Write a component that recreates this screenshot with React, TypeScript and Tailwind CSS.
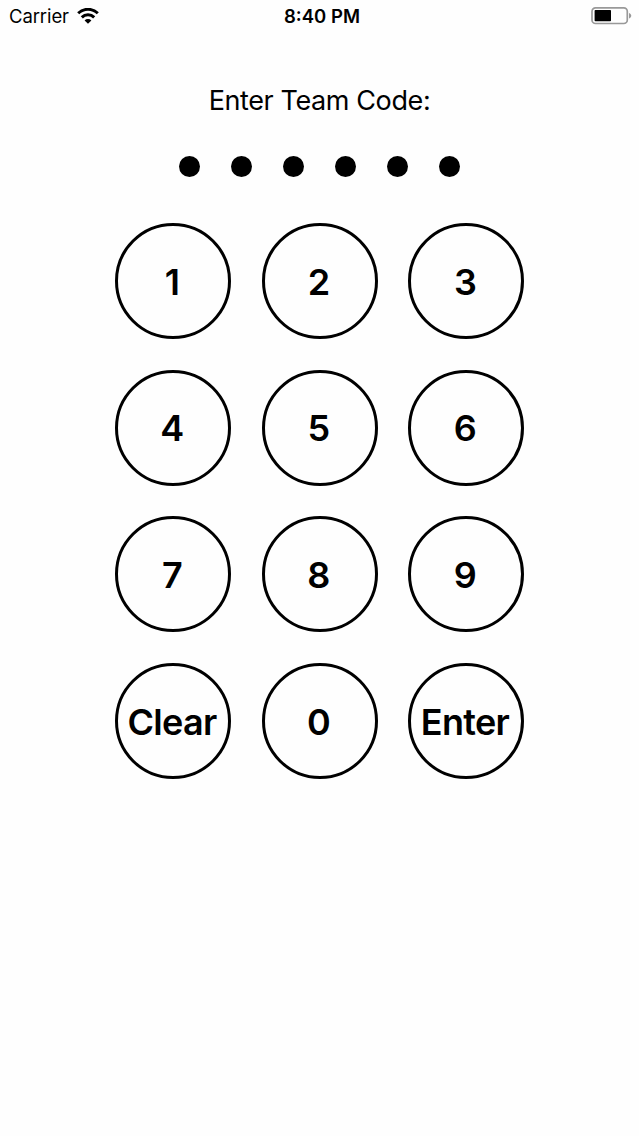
const keys = ["1", "2", "3", "4", "5", "6", "7", "8", "9", "Clear", "0", "Enter"];

function StatusBar() {
    return (
        <div className="grid h-8 grid-cols-[1fr_auto_1fr] items-center pl-[9px] pr-[7px]">
            <div className="flex items-center gap-[8px]">
                <span className="pt-px text-[18.5px] tracking-[-0.1px]">Carrier</span>
                <svg width="22" height="16" viewBox="0 0 22 16" fill="none" stroke="#000" strokeWidth="3">
                    <path d="M1.2 5.3a14 14 0 0 1 19.6 0" />
                    <path d="M4.8 9.4a8.8 8.8 0 0 1 12.4 0" />
                    <path d="M11 15.7 7.6 12.4a4.8 4.8 0 0 1 6.8 0z" fill="#000" stroke="none" />
                </svg>
            </div>
            <span className="pt-px pl-[3px] text-center text-[18.5px] font-semibold">8:40 PM</span>
            <svg className="justify-self-end" width="41" height="18" viewBox="0 0 41 18">
                <rect x="1" y="0.9" width="35.3" height="15.6" rx="3.5" fill="none" stroke="#999" strokeWidth="1.7" />
                <rect x="3.6" y="3" width="16.4" height="11.3" rx="0.8" />
                <path d="M38 6v5.5c3-1 3-4.5 0-5.5z" fill="#999" />
            </svg>
        </div>
    );
}

export default function App() {
    return (
        <div className="min-h-[1136px] w-[639px] bg-[#fefefe] font-[Inter,sans-serif] text-black">
            <StatusBar />
            <h1 className="mt-[51px] text-center text-[27px] leading-[36px] tracking-[-0.4px]">Enter Team Code:</h1>
            <div className="mt-[37px] flex justify-center gap-[31px] pr-px">
                {[0, 1, 2, 3, 4, 5].map((dot) => (
                    <span key={dot} className="size-[21px] rounded-full bg-black" />
                ))}
            </div>
            <div className="mt-[46px] grid grid-cols-[repeat(3,116px)] justify-center gap-x-[30.5px] gap-y-[30.7px]">
                {keys.map((key) => (
                    <button key={key} className="flex h-[116px] w-[116px] items-center justify-center rounded-full border-[3px] border-black pt-px pr-[2px] text-[36px] font-semibold tracking-[-0.7px]">
                        {key}
                    </button>
                ))}
            </div>
        </div>
    );
}
